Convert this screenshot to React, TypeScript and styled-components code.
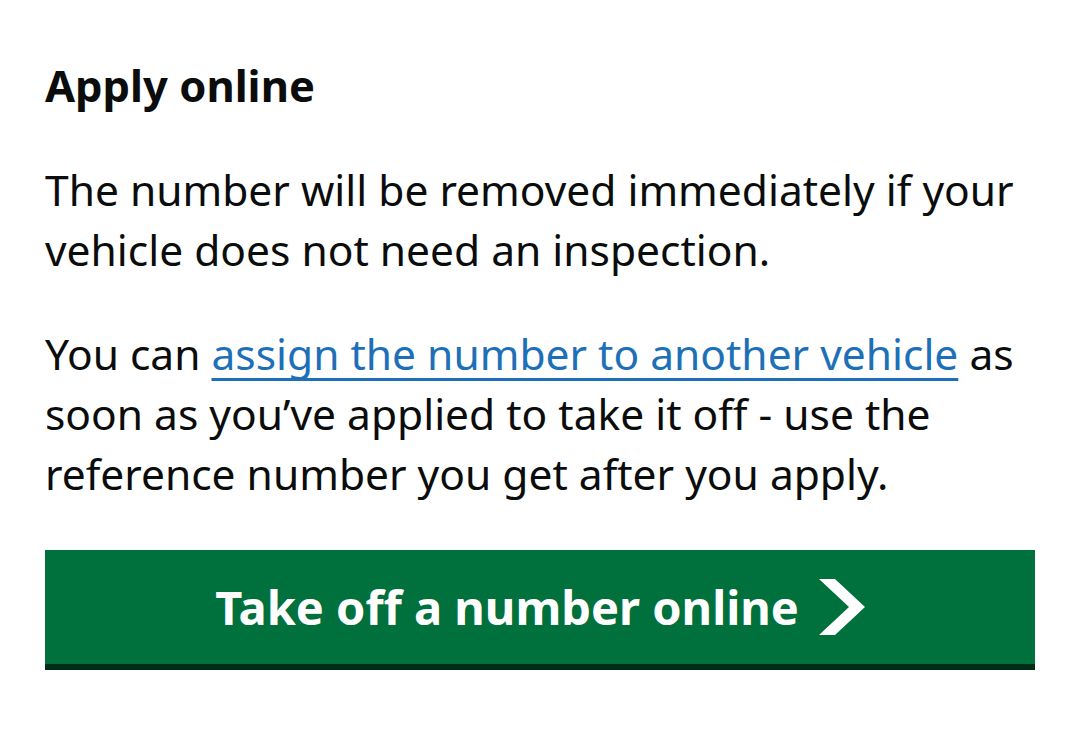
import styled, { createGlobalStyle } from "styled-components";

const Global = createGlobalStyle`
  body {
    margin: 0;
    background: #ffffff;
    font-family: "Noto Sans", "Liberation Sans", sans-serif;
    color: #0b0c0c;
  }
`;

const Page = styled.main`
  width: 990px;
  padding: 55px 45px 0;
`;

const Heading = styled.h2`
  margin: 0 0 45px;
  font-size: 43.5px;
  line-height: 60px;
  font-weight: 700;
`;

const Body = styled.p`
  margin: 0 0 44px;
  font-size: 42.5px;
  line-height: 60px;

  &:last-of-type {
    margin-bottom: 46px;
  }
`;

const Link = styled.a`
  color: #1d70b8;
  text-decoration: underline;
  text-decoration-thickness: 3px;
  text-underline-offset: 8px;
  text-decoration-skip-ink: none;
`;

const StartButton = styled.a`
  display: flex;
  align-items: center;
  justify-content: center;
  gap: 20px;
  height: 114px;
  background: #00703c;
  border-bottom: 6px solid #002d18;
  color: #ffffff;
  font-size: 47px;
  font-weight: 700;
  text-decoration: none;
`;

const Chevron = () => (
  <svg width="46" height="56" viewBox="0 0 46 56" aria-hidden="true">
    <path d="M0 0h16l30 28-30 28H0l30-28z" fill="#ffffff" />
  </svg>
);

export default function App() {
  return (
    <>
      <Global />
      <Page>
        <Heading>Apply online</Heading>
        <Body>
          The number will be removed immediately if your vehicle does not need
          an inspection.
        </Body>
        <Body>
          You can <Link href="#">assign the number to another vehicle</Link> as
          soon as you’ve applied to take it off - use the reference number you
          get after you apply.
        </Body>
        <StartButton href="#">
          Take off a number online
          <Chevron />
        </StartButton>
      </Page>
    </>
  );
}
